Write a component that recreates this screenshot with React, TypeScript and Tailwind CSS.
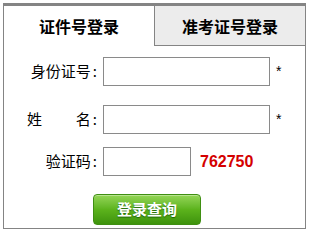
import React from "react";

const cjk = { fontFamily: '"Noto Sans CJK SC", "Liberation Sans", sans-serif' };

export default function App() {
  return (
    <div className="w-[308px] h-[231px] bg-white pl-[3px] pt-[3px]" style={cjk}>
      <div className="w-[303px] h-[226px] border-t-[3px] border-l border-r border-b border-[#848484] flex flex-col">
        <div className="flex h-[40px]">
          <div className="w-[150px] flex items-center justify-center text-[16px] font-bold text-black">
            证件号登录
          </div>
          <div className="flex-1 bg-[#ececec] border-l border-b border-[#848484] flex items-center justify-center text-[16px] font-bold text-black">
            准考证号登录
          </div>
        </div>

        <div className="flex items-center mt-[11px] h-[29px]">
          <div className="w-[73px] ml-[23px] flex justify-end items-center text-[15px] text-black">
            <span>身份证号</span>
            <span className="ml-[2px] mr-[3px]">:</span>
          </div>
          <div className="ml-[3px] w-[167px] h-[29px] border border-[#8a8a8a] bg-white" />
          <span className="ml-[6px] text-[14px] text-black" style={{ fontFamily: '"Liberation Sans", sans-serif' }}>*</span>
        </div>

        <div className="flex items-center mt-[19px] h-[29px]">
          <div className="w-[73px] ml-[23px] flex justify-between items-center text-[15px] text-black">
            <span>姓</span>
            <span>
              名<span className="ml-[2px] mr-[3px]">:</span>
            </span>
          </div>
          <div className="ml-[3px] w-[167px] h-[29px] border border-[#8a8a8a] bg-white" />
          <span className="ml-[6px] text-[14px] text-black" style={{ fontFamily: '"Liberation Sans", sans-serif' }}>*</span>
        </div>

        <div className="flex items-center mt-[13px] h-[29px]">
          <div className="w-[73px] ml-[23px] flex justify-end items-center text-[15px] text-black">
            <span>验证码</span>
            <span className="ml-[2px] mr-[3px]">:</span>
          </div>
          <div className="ml-[3px] w-[88px] h-[29px] border border-[#8a8a8a] bg-white" />
          <span
            className="ml-[9px] text-[16px] font-bold text-[#d40000]"
            style={{ fontFamily: '"Liberation Sans", sans-serif' }}
          >
            762750
          </span>
        </div>

        <div className="mt-[18px] ml-[89px]">
          <div className="w-[108px] h-[31px] rounded-[4px] border border-[#3f8f12] bg-gradient-to-b from-[#94d655] via-[#5cb31c] to-[#3e930d] flex items-center justify-center text-white text-[15px] font-bold [text-shadow:0_1px_1px_rgba(0,60,0,0.6)] shadow-[inset_0_1px_0_rgba(255,255,255,0.35)]">
            登录查询
          </div>
        </div>
      </div>
    </div>
  );
}
